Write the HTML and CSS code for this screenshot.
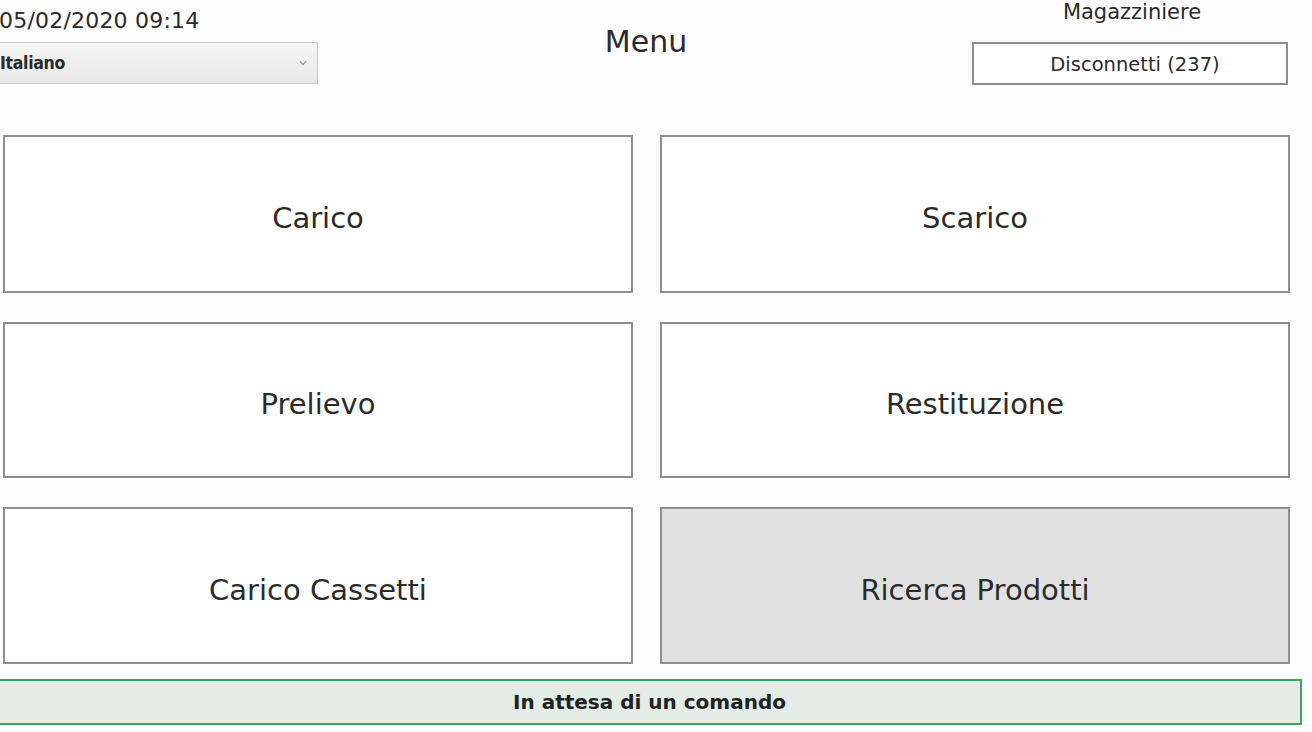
FILE: index.html
```html
<!DOCTYPE html>
<html lang="it">
<head>
<meta charset="utf-8">
<title>Menu</title>
<link rel="stylesheet" href="styles.css">
</head>
<body>
<div class="app">
  <header class="header">
    <div class="left">
      <div class="datetime">05/02/2020 09:14</div>
      <div class="select">
        <span class="select-value">Italiano</span>
        <svg class="chev" width="8" height="6" viewBox="0 0 8 6"><path d="M1 1.5 L4 4.5 L7 1.5" fill="none" stroke="#9a9a9a" stroke-width="1.4"/></svg>
      </div>
    </div>
    <div class="center">
      <div class="title">Menu</div>
    </div>
    <div class="right">
      <div class="role">Magazziniere</div>
      <div class="logout">Disconnetti (237)</div>
    </div>
  </header>
  <main class="grid">
    <div class="tile">Carico</div>
    <div class="tile">Scarico</div>
    <div class="tile">Prelievo</div>
    <div class="tile">Restituzione</div>
    <div class="tile">Carico Cassetti</div>
    <div class="tile tile-active">Ricerca Prodotti</div>
  </main>
  <div class="status">In attesa di un comando</div>
</div>
</body>
</html>
```

FILE: styles.css
```css
html, body {
  margin: 0;
  padding: 0;
  background: #fdfdfd;
}
body {
  font-family: "DejaVu Sans", Verdana, sans-serif;
  color: #2b2b2b;
  width: 1312px;
  height: 732px;
  overflow: hidden;
}
.app {
  display: flex;
  flex-direction: column;
}
.header {
  display: flex;
  height: 135px;
}
.left {
  width: 330px;
  display: flex;
  flex-direction: column;
}
.datetime {
  font-size: 22px;
  line-height: 26px;
  margin-top: 8px;
  margin-left: -1px;
  color: #2b2b2b;
  letter-spacing: 0.2px;
}
.select {
  margin-top: 8px;
  margin-left: -6px;
  width: 324px;
  height: 42px;
  box-sizing: border-box;
  border: 1px solid #c9c9c9;
  background: linear-gradient(#f6f6f6, #e8e8e8);
  display: flex;
  align-items: center;
  justify-content: space-between;
  padding: 0 10px 0 5px;
}
.select-value {
  font-family: "DejaVu Sans Condensed", "DejaVu Sans", sans-serif;
  font-size: 17.5px;
  font-weight: bold;
  color: #2a2a2a;
  letter-spacing: -0.3px;
}
.chev {
  display: block;
}
.center {
  flex: 1;
  display: flex;
  justify-content: center;
}
.title {
  font-size: 30px;
  line-height: 34px;
  margin-top: 25px;
  margin-left: -10px;
  color: #2b2b2b;
}
.right {
  width: 316px;
  margin-right: 24px;
  display: flex;
  flex-direction: column;
  align-items: center;
}
.role {
  font-size: 21px;
  line-height: 24px;
  margin-top: 0;
  margin-left: 4px;
  color: #2b2b2b;
}
.logout {
  margin-top: 18px;
  width: 316px;
  height: 43px;
  box-sizing: border-box;
  border: 2px solid #8e8e8e;
  background: #fff;
  display: flex;
  align-items: center;
  justify-content: center;
  padding-left: 10px;
  padding-top: 2px;
  font-size: 19.5px;
  color: #2b2b2b;
}
.grid {
  display: grid;
  grid-template-columns: 630px 630px;
  grid-template-rows: 158px 156px 157px;
  column-gap: 27px;
  row-gap: 29px;
  padding-left: 3px;
}
.tile {
  box-sizing: border-box;
  border: 2px solid #8f8f8f;
  background: #fefefe;
  display: flex;
  align-items: center;
  justify-content: center;
  padding-top: 8px;
  font-size: 29px;
  color: #2b2b2b;
}
.tile-active {
  background: #e1e1e1;
}
.status {
  margin-top: 15px;
  margin-left: -3px;
  width: 1305px;
  height: 46px;
  box-sizing: border-box;
  border: 2px solid #3aa75c;
  background: #e3ece6;
  display: flex;
  align-items: center;
  justify-content: center;
  font-size: 20px;
  font-weight: bold;
  color: #222;
}
```
